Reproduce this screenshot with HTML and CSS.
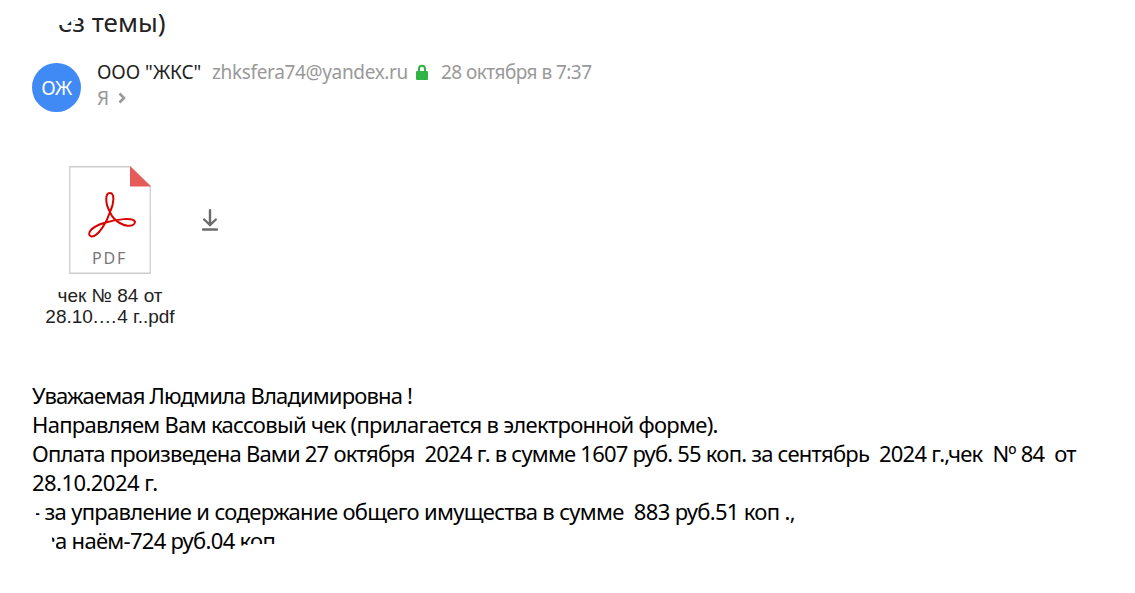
FILE: index.html
```html
<!DOCTYPE html>
<html lang="ru">
<head>
<meta charset="UTF-8">
<meta name="viewport" content="width=device-width, initial-scale=1.0">
<title>Письмо</title>
<link rel="stylesheet" href="styles.css">
</head>
<body>
<div class="message">
    <h1 class="subject">ез темы)</h1>

    <div class="header">
        <div class="avatar">ОЖ</div>
        <div class="info">
            <div class="sender">
                <span class="name">ООО "ЖКС"</span>
                <span class="email">zhksfera74@yandex.ru</span>
                <svg class="lock" width="12" height="16" viewBox="0 0 12 16">
                    <path d="M3 8V4.7a3 3 0 0 1 6 0V8" fill="none" stroke="#32b345" stroke-width="2"/>
                    <rect x="0" y="7" width="12" height="9" rx="1" fill="#32b345"/>
                </svg>
                <span class="date">28 октября в 7:37</span>
            </div>
            <div class="recipient">
                <span>Я</span>
                <svg class="arrow" width="8" height="12" viewBox="0 0 8 12">
                    <path d="M1.5 1.5L6 6L1.5 10.5" fill="none" stroke="#999" stroke-width="2.6"/>
                </svg>
            </div>
        </div>
    </div>

    <div class="attachments">
        <div class="file">
            <svg class="file-icon" width="82" height="108" viewBox="0 0 82 108">
                <path d="M.75 .75H61L81.25 20V107.25H.75Z" fill="#fff" stroke="#ccc" stroke-width="1.3"/>
                <path d="M61 0L82 20.5H61Z" fill="#e75a5a"/>
                <path d="M41 46C36 37 36 27 41 27C46 27 45 38 41 46C38 56 29 71 22.500 70.500C17 69 21 61 35 57C48 53 65 51 66 56C65.500 62 53 61 45 52.500Q42 49 41 46" fill="none" stroke="#d90000" stroke-width="2" stroke-linejoin="round"/>
                <text class="file-type" x="23" y="98">PDF</text>
            </svg>
            <div class="file-name">чек № 84 от<br>28.10.…4 г..pdf</div>
        </div>
        <svg class="download" width="16" height="22" viewBox="0 0 16 22">
            <path d="M8 1.200V16M2.200 10.500L8 16L13.800 10.500M1 20.500H15" fill="none" stroke="#6b6b6b" stroke-width="2.400" stroke-linecap="round"/>
        </svg>
    </div>

    <div class="text">
        <p class="greeting">Уважаемая Людмила Владимировна !</p>
        <p class="intro">Направляем Вам кассовый чек (прилагается в электронной форме).</p>
        <p class="payment">Оплата произведена Вами 27 октября  2024 г. в сумме 1607 руб. 55 коп. за сентябрь  2024 г.,чек  Nº 84  от</p>
        <p class="payment-date">28.10.2024 г.</p>
        <p class="service">- за управление и содержание общего имущества в сумме  883 руб.51 коп .,</p>
        <p class="rent">за наём-724 руб.04 <span class="cut">коп</span></p>
    </div>
</div>
</body>
</html>
```
FILE: styles.css
```css
body {
    margin: 0;
    background-color: #fff;
    font-family: "Noto Sans", "Open Sans", sans-serif;
    color: #000;
}

.message {
    padding: 5px 32px 0;
}

.subject {
    width: max-content;
    margin: 0 0 0 26px;
    font-size: 26px;
    font-weight: 400;
    line-height: 34px;
    color: #222;
    clip-path: polygon(0 20px, 9px 20px, 14px 15px, 20px 15px, 20px 0, 100% 0, 100% 100%, 0 100%);
}

.header {
    display: flex;
    gap: 16px;
    margin-top: 20px;
}

.avatar {
    width: 49px;
    height: 49px;
    margin-top: 4px;
    border-radius: 50%;
    background-color: #3f8af5;
    color: #fff;
    font-size: 19px;
    line-height: 50px;
    text-align: center;
    letter-spacing: -0.5px;
}

.info {
    font-size: 19px;
    line-height: 26px;
    color: #999;
}

.sender {
    display: flex;
    align-items: center;
    white-space: nowrap;
}

.name {
    width: 115px;
    color: #222;
    letter-spacing: -0.1px;
}

.email {
    width: 204px;
    letter-spacing: -0.35px;
}

.lock {
    margin-right: 13px;
}

.date {
    letter-spacing: -0.55px;
}

.recipient {
    display: flex;
    align-items: center;
    gap: 9px;
}

.attachments {
    display: flex;
    margin-top: 54px;
    height: 163px;
}

.file {
    width: 156px;
    text-align: center;
}

.file-icon {
    display: block;
    margin: 0 auto;
}

.file-type {
    font-size: 16px;
    letter-spacing: 1.8px;
    fill: #777;
}

.file-name {
    margin-top: 11px;
    font-family: "Liberation Sans", sans-serif;
    font-size: 19px;
    line-height: 21px;
    color: #222;
}

.download {
    margin: 43px 0 0 14px;
}

.text {
    margin-top: 52px;
    font-size: 22px;
    line-height: 29px;
}

.text p {
    width: max-content;
    margin: 0;
    white-space: pre;
}

.greeting {
    letter-spacing: -0.82px;
}

.intro {
    letter-spacing: -0.7px;
}

.payment {
    letter-spacing: -0.775px;
}

.payment-date {
    letter-spacing: -0.55px;
}

.service,
.rent {
    letter-spacing: -0.7px;
}

.text .service {
    margin-left: 1px;
    letter-spacing: -0.67px;
    clip-path: polygon(3px 0, 100% 0, 100% 100%, 3px 100%);
}

.text .rent {
    margin-left: 13px;
    clip-path: polygon(7px 0, 100% 0, 100% 100%, 11px 100%, 11px 19px, 7px 15px);
}

.cut {
    display: inline-block;
    clip-path: polygon(0 0, 100% 0, 100% 18px, 12px 18px, 0 20px);
}
```
